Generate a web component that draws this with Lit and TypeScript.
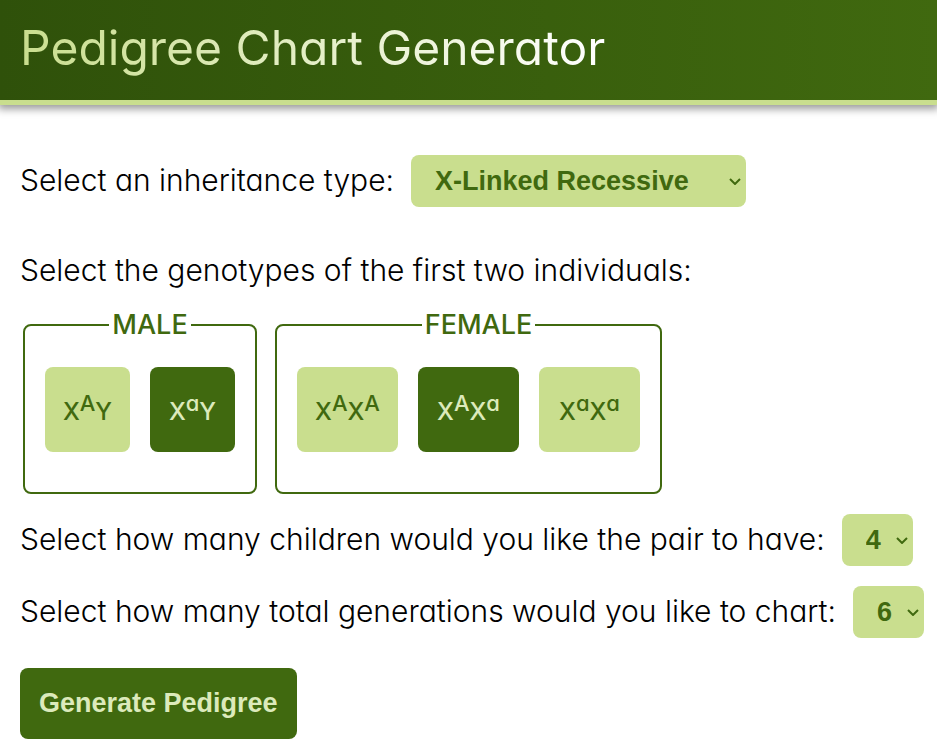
import { LitElement, html, css } from "lit";
import { customElement, state } from "lit/decorators.js";

type Allele = "A" | "a" | "";
interface Genotype {
  id: string;
  first: Allele;
  partner: "X" | "Y";
  second: Allele;
}

const MALE: Genotype[] = [
  { id: "XAY", first: "A", partner: "Y", second: "" },
  { id: "XaY", first: "a", partner: "Y", second: "" },
];

const FEMALE: Genotype[] = [
  { id: "XAXA", first: "A", partner: "X", second: "A" },
  { id: "XAXa", first: "A", partner: "X", second: "a" },
  { id: "XaXa", first: "a", partner: "X", second: "a" },
];

const TYPES = [
  "Autosomal Dominant",
  "Autosomal Recessive",
  "X-Linked Dominant",
  "X-Linked Recessive",
];

@customElement("app-root")
export class AppRoot extends LitElement {
  static styles = css`
    :host {
      --dark: #40690f;
      --deep: #2f510a;
      --light: #c9de8e;
      --pale: #dceabb;
      display: block;
      min-height: 100vh;
      background: #fff;
      color: #000;
      font-family: Inter, "Liberation Sans", sans-serif;
      font-feature-settings: "cv11";
      font-size: 30px;
      font-weight: 300;
      line-height: 40px;
    }
    * {
      box-sizing: border-box;
    }
    header {
      padding: 16px 20px 20px;
      background: linear-gradient(to right, var(--deep), var(--dark));
      border-bottom: 5px solid var(--light);
      box-shadow: 0 2px 8px 2px rgba(0, 0, 0, 0.4);
    }
    h1 {
      width: fit-content;
      margin: 0;
      font-size: 48px;
      font-weight: 400;
      line-height: 64px;
      color: transparent;
      background: linear-gradient(to right, var(--light), #fff);
      background-clip: text;
      -webkit-background-clip: text;
    }
    form {
      display: flex;
      flex-direction: column;
      align-items: flex-start;
      padding: 50px 10px 16px 20px;
    }
    .row {
      display: flex;
      align-items: center;
      gap: 17px;
      margin-bottom: 20px;
    }
    .row label {
      padding-bottom: 2px;
    }
    .prompt {
      margin: 23px 0 19px;
    }
    select,
    .generate {
      border: none;
      border-radius: 8px;
      font-family: "Liberation Sans", Arial, sans-serif;
      font-size: 27px;
      font-weight: 700;
      line-height: 32px;
    }
    .dropdown {
      display: grid;
      align-items: center;
    }
    .dropdown > * {
      grid-area: 1 / 1;
    }
    select {
      appearance: none;
      height: 52px;
      padding: 0 31px 0 24px;
      color: var(--dark);
      background-color: var(--light);
    }
    .chevron {
      justify-self: end;
      width: 12px;
      height: 8px;
      margin-right: 5px;
      fill: none;
      stroke: var(--dark);
      stroke-width: 2;
      pointer-events: none;
    }
    .groups {
      display: flex;
      gap: 18px;
      margin: 0 3px 20px;
    }
    fieldset {
      min-width: 0;
      margin: 0;
      padding: 26px 0 40px 20px;
      border: 2px solid var(--dark);
      border-radius: 8px;
      color: var(--dark);
      font-size: 27px;
      font-weight: 500;
    }
    legend {
      margin: 0 auto;
      padding: 0 3px;
      line-height: 32px;
    }
    .choices {
      display: flex;
      gap: 20px;
      padding-right: 20px;
    }
    .choice {
      display: block;
      cursor: pointer;
    }
    .choice input {
      position: absolute;
      opacity: 0;
      pointer-events: none;
    }
    .tile {
      display: flex;
      align-items: center;
      justify-content: center;
      min-width: 85px;
      height: 85px;
      padding-top: 4px;
      border-radius: 8px;
      background: var(--light);
      font-size: 24px;
      line-height: 40px;
    }
    .tile.wide {
      min-width: 101px;
    }
    .choice input:checked + .tile {
      color: var(--pale);
      background: var(--dark);
    }
    sup {
      font-size: 22px;
      line-height: 0;
    }
    .generate {
      height: 71px;
      padding: 0 19px 2px;
      color: var(--pale);
      background: var(--dark);
      cursor: pointer;
    }
    .actions {
      margin-top: 10px;
      line-height: 0;
    }
  `;

  @state() private male = "XaY";
  @state() private female = "XAXa";

  private group(
    title: string,
    name: string,
    items: Genotype[],
    selected: string,
    pick: (id: string) => void
  ) {
    return html`<fieldset>
      <legend>${title}</legend>
      <div class="choices">
        ${items.map(
          (g) => html`<label class="choice"
            ><input
              type="radio"
              name=${name}
              .checked=${g.id === selected}
              @change=${() => pick(g.id)}
            /><span class=${g.second ? "tile wide" : "tile"}
              ><span
                >X<sup>${g.first}</sup>${g.partner}${g.second
                  ? html`<sup>${g.second}</sup>`
                  : ""}</span
              ></span
            ></label
          >`
        )}
      </div>
    </fieldset>`;
  }

  private dropdown(id: string, options: string[], value: string) {
    return html`<div class="dropdown">
      <select id=${id}>
        ${options.map((o) => html`<option ?selected=${o === value}>${o}</option>`)}
      </select>
      <svg class="chevron" viewBox="0 0 12 8" aria-hidden="true">
        <path d="M1 2l5 5 5-5" />
      </svg>
    </div>`;
  }

  render() {
    const counts = ["1", "2", "3", "4", "5", "6"];
    return html`
      <header><h1>Pedigree Chart Generator</h1></header>
      <form @submit=${(e: Event) => e.preventDefault()}>
        <div class="row">
          <label for="type">Select an inheritance type:</label>
          ${this.dropdown("type", TYPES, "X-Linked Recessive")}
        </div>
        <div class="prompt">Select the genotypes of the first two individuals:</div>
        <div class="groups">
          ${this.group("MALE", "male", MALE, this.male, (id) => (this.male = id))}
          ${this.group("FEMALE", "female", FEMALE, this.female, (id) => (this.female = id))}
        </div>
        <div class="row">
          <label for="children">Select how many children would you like the pair to have:</label>
          ${this.dropdown("children", counts, "4")}
        </div>
        <div class="row">
          <label for="generations">Select how many total generations would you like to chart:</label>
          ${this.dropdown("generations", counts, "6")}
        </div>
        <div class="actions">
          <button class="generate" type="submit">Generate Pedigree</button>
        </div>
      </form>
    `;
  }
}
